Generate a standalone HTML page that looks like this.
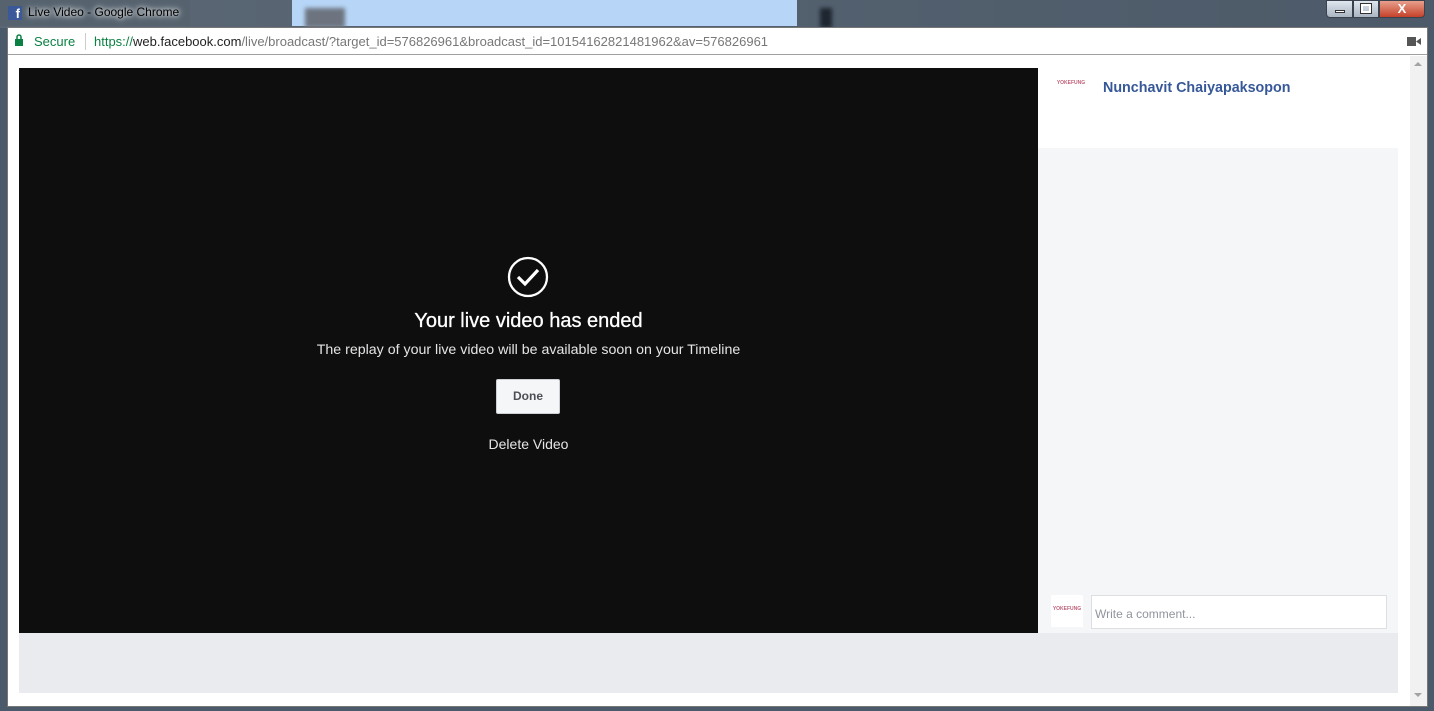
<!DOCTYPE html>
<html><head><style>
*{margin:0;padding:0;box-sizing:border-box}
body{width:1434px;height:711px;overflow:hidden;background:#4a5a6b;font-family:"Liberation Sans",Arial,sans-serif;position:relative}
.abs{position:absolute}
</style></head><body>
<div class="abs" style="left:0;top:0;width:1434px;height:28px;background:linear-gradient(90deg,#5b6774 0,#4c5a69 100%)"></div>
<div class="abs" style="left:292px;top:0;width:505px;height:26px;background:#b7d6f7"></div>
<div class="abs" style="left:305px;top:8px;width:40px;height:20px;background:#6d7480;filter:blur(2px)"></div>
<div class="abs" style="left:820px;top:8px;width:12px;height:20px;background:#1e2630;filter:blur(2px)"></div>
<div class="abs" style="left:0;top:0;width:190px;height:26px;background:#56636f"></div>
<div class="abs" style="left:8px;top:6px;width:14px;height:14px;background:#3b5998;color:#fff;font-size:13px;font-weight:bold;line-height:16px;text-align:right;padding-right:2px">f</div>
<div class="abs" style="left:28px;top:5px;font-size:12px;color:#000;text-shadow:0 0 4px #fff,0 0 8px #fff">Live Video - Google Chrome</div>
<div class="abs" style="left:1326px;top:0;width:27px;height:18px;background:linear-gradient(#dfe6ee,#a9b5c2);border:1px solid #3a434d;border-radius:0 0 0 4px"><div style="margin:9px auto 0;width:10px;height:3px;background:#fff;border:1px solid #333"></div></div>
<div class="abs" style="left:1353px;top:0;width:26px;height:18px;background:linear-gradient(#dfe6ee,#a9b5c2);border:1px solid #3a434d"><div style="margin:3px auto 0;width:10px;height:9px;border:2px solid #fff;outline:1px solid #333"></div></div>
<div class="abs" style="left:1379px;top:0;width:46px;height:18px;background:linear-gradient(#e8a08c,#c4412a);border:1px solid #3a434d;border-radius:0 0 4px 0;color:#fff;font-weight:bold;font-size:13px;text-align:center;line-height:16px">X</div>
<div class="abs" style="left:7px;top:27px;width:1421px;height:680px;background:#fff;border:1px solid #777"></div>
<div class="abs" style="left:8px;top:54px;width:1419px;height:1px;background:#a0a0a0"></div>
<svg class="abs" style="left:14px;top:34px" width="10" height="13"><rect x="1" y="5" width="8" height="7" fill="#0b8043"/><path d="M3 5V3a2 2 0 0 1 4 0v2" stroke="#0b8043" stroke-width="1.5" fill="none"/></svg>
<div class="abs" style="left:34px;top:34px;font-size:13px;color:#0b8043">Secure</div>
<div class="abs" style="left:85px;top:33px;width:1px;height:17px;background:#ccc"></div>
<div class="abs" style="left:94px;top:34px;font-size:13px;color:#777;white-space:nowrap"><span style="color:#0b8043">https://</span><span style="color:#222">web.facebook.com</span>/live/broadcast/?target_id=576826961&amp;broadcast_id=10154162821481962&amp;av=576826961</div>
<svg class="abs" style="left:1407px;top:37px" width="14" height="9"><rect x="0" y="0" width="9" height="9" fill="#555"/><path d="M9 4.5L14 1v7z" fill="#555"/></svg>
<div class="abs" style="left:1410px;top:56px;width:17px;height:650px;background:#f1f1f1"></div>
<div class="abs" style="left:1414px;top:62px;width:0;height:0;border:4px solid transparent;border-bottom:4px solid #a3a3a3;border-top:0"></div>
<div class="abs" style="left:1414px;top:693px;width:0;height:0;border:4px solid transparent;border-top:4px solid #a3a3a3;border-bottom:0"></div>
<div class="abs" style="left:19px;top:68px;width:1019px;height:565px;background:#0e0e0f"></div>
<svg class="abs" style="left:507px;top:256px" width="42" height="42"><circle cx="21" cy="21" r="19" stroke="#fff" stroke-width="2.3" fill="none"/><path d="M11 21l7 7 13-14" stroke="#fff" stroke-width="3.2" fill="none"/></svg>
<div class="abs" style="left:19px;top:310px;width:1019px;text-align:center;color:#fff;font-size:20px;-webkit-text-stroke:0.3px #fff">Your live video has ended</div>
<div class="abs" style="left:19px;top:342px;width:1019px;text-align:center;color:#e5e5e5;font-size:14.2px">The replay of your live video will be available soon on your Timeline</div>
<div class="abs" style="left:496px;top:379px;width:64px;height:35px;background:#f5f6f7;border:1px solid #ccd0d5;border-radius:2px;color:#4b4f56;font-size:12px;font-weight:bold;text-align:center;line-height:33px">Done</div>
<div class="abs" style="left:19px;top:436px;width:1019px;text-align:center;color:#e5e5e5;font-size:14px">Delete Video</div>
<div class="abs" style="left:1038px;top:148px;width:360px;height:485px;background:#f5f6f7"></div>
<div class="abs" style="left:1051px;top:68px;width:40px;height:30px;background:#fff;color:#c0607a;font-size:5px;font-weight:bold;line-height:30px;text-align:center">YOKEFUNG</div>
<div class="abs" style="left:1103px;top:80px;color:#365899;font-size:14.3px;font-weight:bold">Nunchavit Chaiyapaksopon</div>
<div class="abs" style="left:1051px;top:595px;width:32px;height:32px;background:#fff;color:#c0607a;font-size:5px;font-weight:bold;line-height:28px;text-align:center">YOKEFUNG</div>
<div class="abs" style="left:1091px;top:595px;width:296px;height:34px;background:#fff;border:1px solid #dddfe2;color:#90949c;font-size:12px;padding:11px 3px">Write a comment...</div>
<div class="abs" style="left:19px;top:633px;width:1379px;height:60px;background:#e9ebee"></div>
</body></html>
